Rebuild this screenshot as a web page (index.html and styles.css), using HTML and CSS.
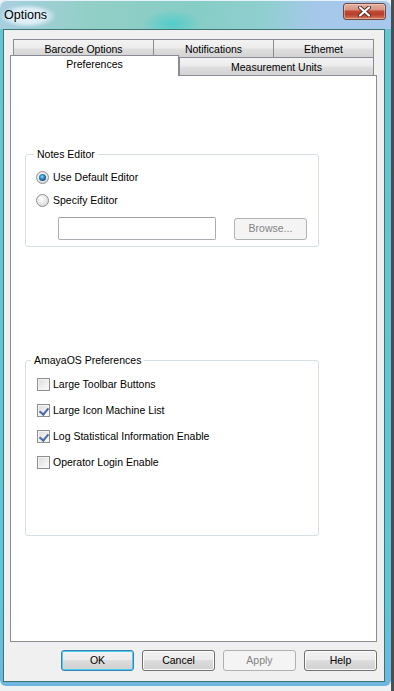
FILE: index.html
```html
<!DOCTYPE html>
<html lang="en">
<head>
    <meta charset="UTF-8">
    <title>Options</title>
    <link rel="stylesheet" href="styles.css">
</head>
<body>
<div class="window">
    <div class="titleBar">
        <span class="title">Options</span>
        <a href="javascript:;" class="closeBtn">
            <svg width="17" height="11" viewBox="0 0 17 11">
                <path d="M4 1.5 L13 9.5 M13 1.5 L4 9.5" stroke="#5a2a22" stroke-width="4" stroke-linecap="round"/>
                <path d="M4 1.5 L13 9.5 M13 1.5 L4 9.5" stroke="#fff" stroke-width="2.2" stroke-linecap="round"/>
            </svg>
        </a>
    </div>
    <div class="client">
        <div class="tabs">
            <ul class="tabRow back">
                <li class="tab t1">Barcode Options</li>
                <li class="tab t2">Notifications</li>
                <li class="tab t3">Ethemet</li>
            </ul>
            <ul class="tabRow front">
                <li class="tab t4 on">Preferences</li>
                <li class="tab t5">Measurement Units</li>
            </ul>
            <div class="panel">
                <fieldset class="group notes">
                    <legend>Notes Editor</legend>
                    <div class="opt"><span class="radio on"></span><span>Use Default Editor</span></div>
                    <div class="opt"><span class="radio"></span><span>Specify Editor</span></div>
                    <div class="pathRow">
                        <span class="textBox"></span>
                        <span class="btn small disabled">Browse...</span>
                    </div>
                </fieldset>
                <fieldset class="group amaya">
                    <legend>AmayaOS Preferences</legend>
                    <div class="opt chk"><span class="check"></span><span>Large Toolbar Buttons</span></div>
                    <div class="opt chk"><span class="check on"></span><span>Large Icon Machine List</span></div>
                    <div class="opt chk"><span class="check on"></span><span>Log Statistical Information Enable</span></div>
                    <div class="opt chk"><span class="check"></span><span>Operator Login Enable</span></div>
                </fieldset>
            </div>
        </div>
        <div class="btnBar">
            <span class="btn default">OK</span>
            <span class="btn">Cancel</span>
            <span class="btn disabled">Apply</span>
            <span class="btn">Help</span>
        </div>
    </div>
</div>
</body>
</html>
```
FILE: styles.css
```css
*{margin:0;padding:0;box-sizing:border-box}
ul{list-style:none}
a{text-decoration:none}
body{width:394px;height:691px;overflow:hidden;font:10.5px/13px "Liberation Sans",Arial,sans-serif;color:#000;
    background:linear-gradient(to right,#edf1f2 391px,#4b4e50 391px)}

/* glass frame: lower part cyan, title strip teal/blue */
.window{width:391px;height:686px;padding:0 6px 5px 3px;border-radius:7px 7px 6px 6px;
    background:linear-gradient(rgba(0,0,0,0) 29px,#66c5d3 29px,#5ec7d6 600px,#6fb6de 100%),
    radial-gradient(ellipse 30px 14px at 172px 24px,#52cccb,rgba(82,204,203,0)),
    linear-gradient(100deg,#a9cfe2 0,#92cfc6 18%,#86cdc6 38%,#8fcfcf 52%,#a5c8ea 62%,#aac8ef 100%);
    box-shadow:inset 0 1px 0 #e6f2fa}
.titleBar{height:29px;display:flex;align-items:flex-start;justify-content:space-between}
.title{margin:5px 0 0 -2px;padding:3px 8px 4px 3px;font-size:12.5px;line-height:15px;border-radius:10px;
    background:radial-gradient(ellipse at center,rgba(226,240,248,.95) 45%,rgba(226,240,248,0) 75%)}
.closeBtn{margin:3px -1px 0 0;width:43px;height:17px;display:flex;align-items:center;justify-content:center;
    border:1px solid #6b4a45;border-radius:3px;
    background:linear-gradient(#e4b0a2 0,#d99382 40%,#c04a36 46%,#b8402c 70%,#d47a5e 100%);
    box-shadow:inset 0 0 0 1px rgba(255,225,210,.45)}

.client{height:653px;border:1px solid #3d7476;background:#f0f0f0}

/* tab control */
.tabs{margin:9px 0 0 6px;width:367px}
.tabRow{display:flex;height:18px}
.tabRow.back{padding-left:3px}
.tab{height:18px;padding-top:3px;text-align:center;border:1px solid #898c95;border-bottom:none;
    background:linear-gradient(#f3f3f3 0,#ececec 45%,#dedede 55%,#d3d3d3 100%)}
.t1{width:141px}
.t2{width:120px;border-left:none}
.t3{width:100px;border-left:none}
.t4{width:169px}
.t5{width:195px}
.tab.on{height:21px;margin-top:-2px;position:relative;z-index:2;background:#fff;padding-top:2px}
.panel{height:567px;border:1px solid #898c95;background:#fff}

/* group boxes */
.group{border:1px solid #d5dfe5;border-radius:3px;width:294px;margin-left:14px;min-inline-size:0}
.group legend{padding:0 3px;line-height:13px}
.notes{margin-top:72px;padding:10px 8px 6px 8px}
.amaya{margin-top:107px;padding:11px 8px 66px 5px}

.opt{display:flex;align-items:center;height:13px;gap:4px}
.opt+.opt{margin-top:10px}
.opt.chk{gap:3px}
.opt.chk+.opt.chk{margin-top:13px}

.radio{width:13px;height:13px;margin-left:2px;border-radius:50%;border:1px solid #8c8e90;position:relative;
    background:radial-gradient(circle at 40% 35%,#fdfdfd 0,#e6e6e6 55%,#c9c9c9 100%)}
.radio.on:after{content:"";position:absolute;left:2px;top:2px;width:7px;height:7px;border-radius:50%;
    background:radial-gradient(circle at 45% 40%,#9fe0fb 0,#2c8fcf 35%,#134a78 75%,#0b2c4c 100%)}
.check{width:13px;height:13px;margin-left:6px;border:1px solid #8f8f8f;position:relative;
    background:linear-gradient(135deg,#d9d9d9 0,#efefef 55%,#fbfbfb 100%);box-shadow:inset 0 0 0 1px #f4f4f4}
.check.on:after{content:"";position:absolute;left:3px;top:1px;width:4px;height:7px;
    border:solid #4d6aa8;border-width:0 2px 2px 0;transform:rotate(40deg)}

.pathRow{display:flex;align-items:center;margin-top:10px}
.textBox{width:158px;height:23px;margin-left:24px;border:1px solid #abadb3;border-radius:2px;background:#fff;
    border-top-color:#a0a2a8}

/* buttons */
.btn{width:73px;height:21px;display:flex;align-items:center;justify-content:center;border:1px solid #707070;
    border-radius:3px;box-shadow:inset 0 0 0 1px #fbfbfb;
    background:linear-gradient(#f2f2f2 0,#ebebeb 50%,#dddddd 50%,#cfcfcf 100%)}
.btn.small{margin-left:18px;height:22px}
.btn.default{border-color:#3c7fb1;box-shadow:inset 0 0 0 1px #48d0f8}
.btn.disabled{border-color:#adb2b5;background:#f4f4f4;color:#838383;box-shadow:none}
.btnBar{display:flex;justify-content:flex-end;gap:8px;width:373px;margin-top:8px}
```
